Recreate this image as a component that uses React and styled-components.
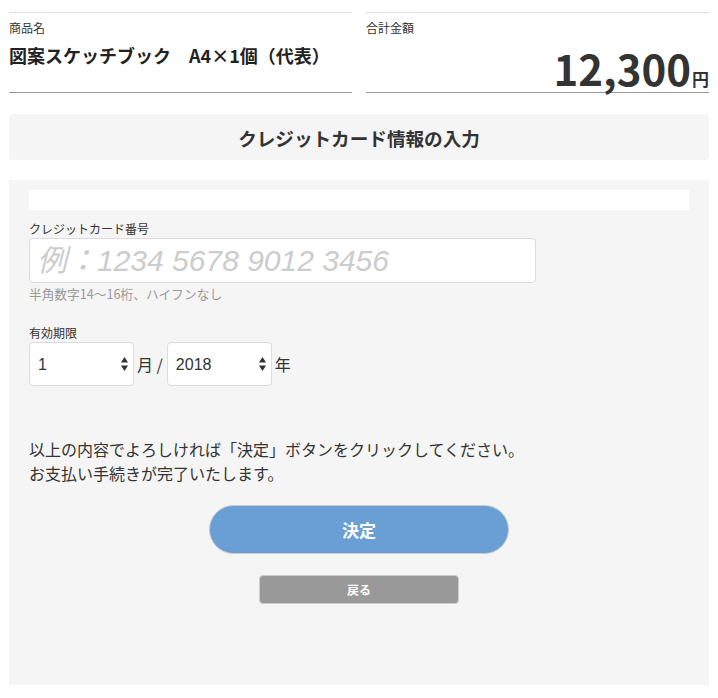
import React from "react";
import styled, { createGlobalStyle } from "styled-components";

const GlobalStyle = createGlobalStyle`
  body {
    margin: 0;
    background: #fff;
    color: #333;
    font-family: "Noto Sans CJK JP", "Noto Sans", sans-serif;
  }
`;

const Page = styled.div`
  padding: 12px 9px 13px;
`;

const Summary = styled.div`
  display: grid;
  grid-template-columns: 1fr 1fr;
  gap: 14px;
`;

const SummaryItem = styled.div`
  height: 79px;
  border-top: 1px solid #ddd;
  border-bottom: 1px solid #999;
  display: flex;
  flex-direction: column;
`;

const SummaryLabel = styled.div`
  margin-top: 6px;
  font-size: 12px;
  line-height: 18px;
  color: #333;
`;

const ProductName = styled.div`
  margin-top: 4px;
  font-size: 18px;
  font-weight: 700;
  line-height: 28px;
  color: #222;
`;

const Price = styled.div`
  margin-top: auto;
  text-align: right;
  font-weight: 700;
  color: #333;
  font-size: 42px;
  line-height: 42px;
  margin-bottom: -8px;
`;

const Yen = styled.span`
  font-size: 17px;
  margin-left: 1px;
`;

const Heading = styled.h2`
  margin: 21px 0 0;
  height: 46px;
  background: #f5f5f5;
  border-radius: 4px;
  display: flex;
  align-items: center;
  justify-content: center;
  font-size: 18.6px;
  font-weight: 700;
  color: #333;
`;

const Panel = styled.div`
  margin-top: 20px;
  background: #f5f5f5;
  padding: 10px 20px 81px;
`;

const Notice = styled.div`
  height: 20px;
  background: #fff;
`;

const FieldLabel = styled.div`
  margin-top: ${(p) => p.$top}px;
  font-size: 12px;
  line-height: 18px;
  color: #333;
`;

const CardInput = styled.input`
  display: block;
  box-sizing: border-box;
  width: 507px;
  height: 45px;
  margin: 0;
  padding: 0 7px;
  border: 1px solid #ddd;
  border-radius: 4px;
  background: #fff;
  font-family: "Liberation Sans", "Noto Sans CJK JP", sans-serif;
  font-size: 30px;
  font-style: italic;
  color: #333;
  &::placeholder {
    color: #ccc;
  }
`;

const Help = styled.div`
  margin-top: 2px;
  font-size: 12.7px;
  line-height: 18px;
  color: #999;
`;

const ExpiryRow = styled.div`
  display: flex;
  align-items: center;
  gap: 3px;
  font-size: 16px;
  color: #333;
`;

const SelectWrap = styled.div`
  position: relative;
  width: 105px;
  height: 44px;
`;

const Select = styled.select`
  appearance: none;
  box-sizing: border-box;
  width: 100%;
  height: 100%;
  margin: 0;
  padding: 0 8px;
  border: 1px solid #ddd;
  border-radius: 4px;
  background: #fff;
  font-family: "Liberation Sans", "Noto Sans CJK JP", sans-serif;
  font-size: 16px;
  color: #333;
`;

const Arrows = styled.svg`
  position: absolute;
  right: 5px;
  top: 14px;
  pointer-events: none;
`;

const Unit = styled.span`
  margin-right: 1px;
`;

const Message = styled.p`
  margin: 51px 0 0;
  font-size: 16px;
  line-height: 24px;
  color: #333;
`;

const Actions = styled.div`
  display: flex;
  flex-direction: column;
  align-items: center;
  margin-top: 20px;
  gap: 21px;
`;

const Button = styled.button`
  box-sizing: border-box;
  width: ${(p) => (p.$primary ? 300 : 200)}px;
  height: ${(p) => (p.$primary ? 49 : 29)}px;
  border: 1px solid #ccc;
  border-radius: ${(p) => (p.$primary ? "25px" : "4px")};
  background: ${(p) => (p.$primary ? "#6a9fd5" : "#999")};
  color: #fff;
  font-family: "Noto Sans CJK JP", sans-serif;
  font-weight: 700;
  font-size: ${(p) => (p.$primary ? 17 : 12)}px;
  padding: 0;
  cursor: pointer;
`;

const UpDown = () => (
  <Arrows width="9" height="16" viewBox="0 0 9 16">
    <path d="M4.5 1 L8 6.5 H1 Z" fill="#333" />
    <path d="M4.5 15 L8 9.5 H1 Z" fill="#333" />
  </Arrows>
);

const App = () => {
  return (
    <Page>
      <GlobalStyle />
      <Summary>
        <SummaryItem>
          <SummaryLabel>商品名</SummaryLabel>
          <ProductName>図案スケッチブック　A4×1個（代表）</ProductName>
        </SummaryItem>
        <SummaryItem>
          <SummaryLabel>合計金額</SummaryLabel>
          <Price>
            12,300<Yen>円</Yen>
          </Price>
        </SummaryItem>
      </Summary>

      <Heading>クレジットカード情報の入力</Heading>

      <Panel>
        <Notice />
        <FieldLabel $top={10}>クレジットカード番号</FieldLabel>
        <CardInput placeholder="例：1234 5678 9012 3456" />
        <Help>半角数字14〜16桁、ハイフンなし</Help>

        <FieldLabel $top={21}>有効期限</FieldLabel>
        <ExpiryRow>
          <SelectWrap>
            <Select defaultValue="1">
              {Array.from({ length: 12 }, (_, i) => (
                <option key={i}>{i + 1}</option>
              ))}
            </Select>
            <UpDown />
          </SelectWrap>
          <Unit>月 /</Unit>
          <SelectWrap>
            <Select defaultValue="2018">
              {[2018, 2019, 2020, 2021, 2022, 2023].map((y) => (
                <option key={y}>{y}</option>
              ))}
            </Select>
            <UpDown />
          </SelectWrap>
          <Unit>年</Unit>
        </ExpiryRow>

        <Message>
          以上の内容でよろしければ「決定」ボタンをクリックしてください。
          <br />
          お支払い手続きが完了いたします。
        </Message>

        <Actions>
          <Button $primary>決定</Button>
          <Button>戻る</Button>
        </Actions>
      </Panel>
    </Page>
  );
};

export default App;
